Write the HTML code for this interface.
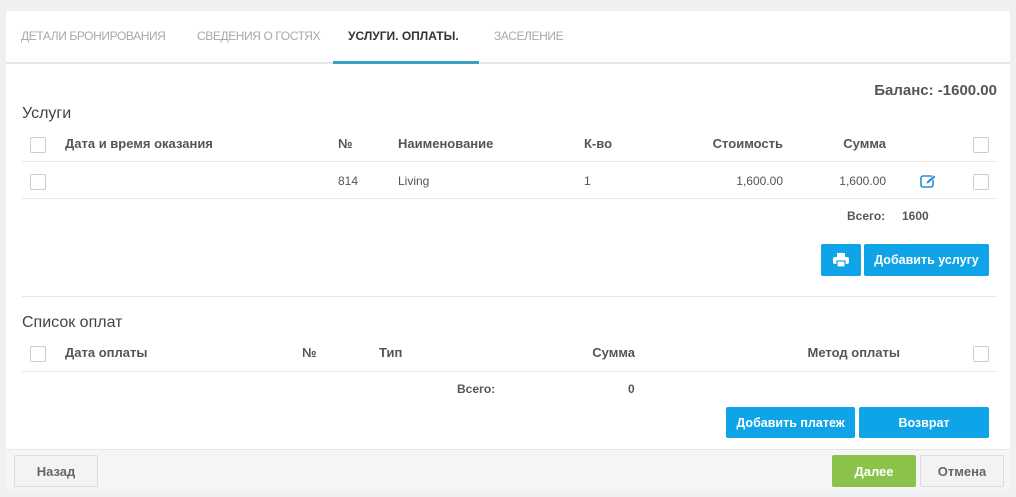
<!DOCTYPE html>
<html><head><meta charset="utf-8"><style>
*{box-sizing:border-box;margin:0;padding:0}
body{width:1016px;height:497px;background:#eef0f2;font-family:"Liberation Sans",sans-serif;position:relative;overflow:hidden;color:#444}
.card{position:absolute;left:6px;top:11px;width:1004px;height:480px;background:#fff}
.a{position:absolute;white-space:nowrap}
.tab{font-size:12px;color:#a9a9a9;top:29px;letter-spacing:-0.4px}
.hd{font-size:13px;font-weight:bold;color:#555}
.td{font-size:12px;color:#555}
.cb{position:absolute;width:16px;height:16px;border:1px solid #ccc;border-radius:2px;background:#fff}
.line{position:absolute;height:1px;background:#e8e8e8}
.btn{position:absolute;background:#0fa3e8;color:#fff;font-weight:bold;font-size:12.5px;text-align:center;border-radius:2px;display:flex;align-items:center;justify-content:center}
.foot{position:absolute;left:6px;top:449px;width:1004px;height:42px;background:#f5f5f5;border-top:1px solid #e5e5e5}
.fb{position:absolute;top:455px;height:32px;display:flex;align-items:center;justify-content:center;font-size:13px;font-weight:bold;border-radius:2px}
</style></head><body>
<div class="card"></div>
<div class="a tab" style="left:21px">ДЕТАЛИ БРОНИРОВАНИЯ</div>
<div class="a tab" style="left:197px">СВЕДЕНИЯ О ГОСТЯХ</div>
<div class="a tab" style="left:348px;color:#333;font-weight:bold;letter-spacing:0">УСЛУГИ. ОПЛАТЫ.</div>
<div class="a tab" style="left:494px">ЗАСЕЛЕНИЕ</div>
<div class="line" style="left:6px;top:62px;width:1004px;background:#e6e6e6;height:2px"></div>
<div class="a" style="left:333px;top:61px;width:146px;height:3px;background:#3aa0c0"></div>

<div class="a" style="right:19px;top:82px;font-size:15px;font-weight:bold;color:#555">Баланс: -1600.00</div>
<div class="a" style="left:22px;top:105px;font-size:16px;color:#444">Услуги</div>

<div class="cb" style="left:30px;top:137px"></div>
<div class="a hd" style="left:65px;top:136px">Дата и время оказания</div>
<div class="a hd" style="left:338px;top:136px">№</div>
<div class="a hd" style="left:398px;top:136px">Наименование</div>
<div class="a hd" style="left:584px;top:136px">К-во</div>
<div class="a hd" style="right:233px;top:136px">Стоимость</div>
<div class="a hd" style="right:130px;top:136px">Сумма</div>
<div class="cb" style="left:973px;top:137px"></div>
<div class="line" style="left:22px;top:161px;width:975px"></div>

<div class="cb" style="left:30px;top:174px"></div>
<div class="a td" style="left:338px;top:174px">814</div>
<div class="a td" style="left:398px;top:174px">Living</div>
<div class="a td" style="left:584px;top:174px">1</div>
<div class="a td" style="right:233px;top:174px">1,600.00</div>
<div class="a td" style="right:130px;top:174px">1,600.00</div>
<svg class="a" style="left:920px;top:174px" width="18" height="15" viewBox="0 0 18 15"><rect x="1" y="2" width="12" height="11" rx="2" fill="none" stroke="#2a8fd8" stroke-width="1.6"/><path d="M6 10l1-3 7-6 2 2-7 6z" fill="#2a8fd8" stroke="#fff" stroke-width=".6"/></svg>
<div class="cb" style="left:973px;top:174px"></div>
<div class="line" style="left:22px;top:198px;width:975px"></div>

<div class="a hd" style="left:847px;top:209px;font-size:12px">Всего:</div>
<div class="a hd" style="left:902px;top:209px;font-size:12px">1600</div>
<div class="btn" style="left:821px;top:244px;width:40px;height:32px"><svg width="16" height="14" viewBox="0 0 16 14"><rect x="4" y="0" width="8" height="4" fill="#fff"/><rect x="0" y="4" width="16" height="7" rx="2" fill="#fff"/><rect x="4" y="8" width="8" height="6" fill="#fff" stroke="#0fa3e8" stroke-width="1.2"/></svg></div>
<div class="btn" style="left:864px;top:244px;width:125px;height:32px">Добавить услугу</div>
<div class="line" style="left:22px;top:296px;width:975px"></div>

<div class="a" style="left:22px;top:314px;font-size:16px;color:#444">Список оплат</div>
<div class="cb" style="left:30px;top:346px"></div>
<div class="a hd" style="left:65px;top:345px">Дата оплаты</div>
<div class="a hd" style="left:302px;top:345px">№</div>
<div class="a hd" style="left:379px;top:345px">Тип</div>
<div class="a hd" style="right:381px;top:345px">Сумма</div>
<div class="a hd" style="right:116px;top:345px">Метод оплаты</div>
<div class="cb" style="left:973px;top:346px"></div>
<div class="line" style="left:22px;top:371px;width:975px"></div>
<div class="a hd" style="left:457px;top:382px;font-size:12px">Всего:</div>
<div class="a hd" style="left:628px;top:382px;font-size:12px">0</div>
<div class="btn" style="left:726px;top:407px;width:129px;height:31px">Добавить платеж</div>
<div class="btn" style="left:859px;top:407px;width:130px;height:31px">Возврат</div>

<div class="foot"></div>
<div class="fb" style="left:14px;width:84px;background:#f3f3f3;border:1px solid #ddd;color:#666">Назад</div>
<div class="fb" style="left:832px;width:84px;background:#8bc34a;color:#fff">Далее</div>
<div class="fb" style="left:920px;width:84px;background:#f3f3f3;border:1px solid #ddd;color:#666">Отмена</div>
</body></html>
